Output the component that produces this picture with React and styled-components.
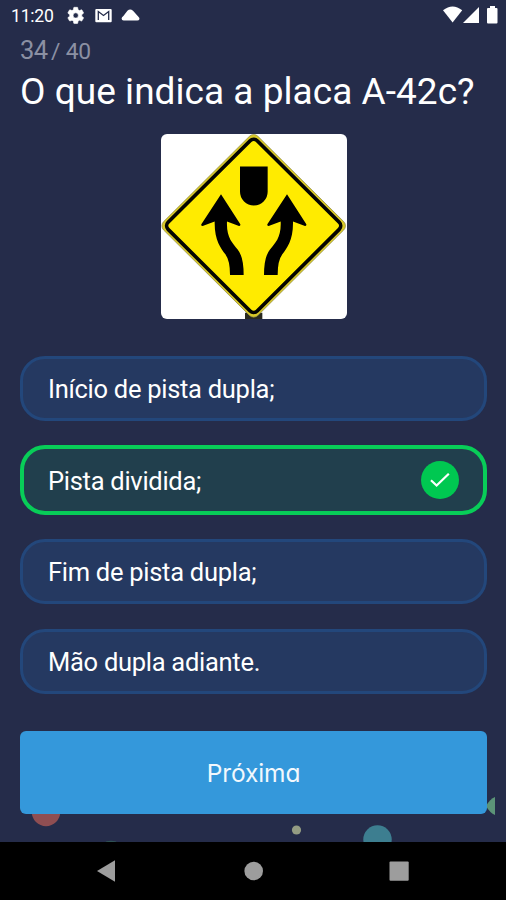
import React from "react";
import styled, { createGlobalStyle } from "styled-components";

const GlobalStyle = createGlobalStyle`
  * { box-sizing: border-box; }
  body { margin: 0; background: #252c4a; }
`;

const Screen = styled.div`
  width: 506px;
  height: 900px;
  display: flex;
  flex-direction: column;
  overflow: hidden;
  position: relative;
  background: #252c4a;
  color: #fff;
  font-family: Roboto, "Liberation Sans", sans-serif;
`;

const StatusBar = styled.header`
  height: 32px;
  flex: none;
  display: flex;
  justify-content: space-between;
  padding: 0 7px 0 11px;
`;

const StatusGroup = styled.div`
  display: flex;
  height: 32px;
`;

const Clock = styled.span`
  width: 56px;
  font-size: 17.6px;
  line-height: 32px;
  letter-spacing: -0.25px;
  white-space: nowrap;
`;

const Quiz = styled.main`
  flex: 1;
  display: flex;
  flex-direction: column;
  padding: 0 19px 28px 20px;
  position: relative;
`;

const Counter = styled.div`
  height: 36px;
  display: flex;
  align-items: baseline;
  color: #8b90a3;
  line-height: 36px;
`;

const Current = styled.span`
  font-size: 25.5px;
  width: 31px;
  letter-spacing: -0.5px;
`;

const Total = styled.span`
  font-size: 22.8px;
  letter-spacing: -0.2px;
`;

const Question = styled.h1`
  margin: 0;
  height: 66px;
  font-size: 37px;
  font-weight: 400;
  line-height: 48px;
  letter-spacing: 0.04px;
  white-space: nowrap;
`;

const SignCard = styled.div`
  width: 186px;
  height: 185px;
  align-self: center;
  border-radius: 6px;
  overflow: hidden;
  background: #fff;
  margin-bottom: 36.5px;

  svg { display: block; }
`;

const Options = styled.div`
  display: flex;
  flex-direction: column;
  gap: 24.4px;
`;

const Option = styled.button`
  width: 467px;
  height: ${(p) => (p.$correct ? 70 : 65)}px;
  display: flex;
  align-items: center;
  justify-content: space-between;
  padding: ${(p) => (p.$correct ? "0 24px" : "1px 25px 0")};
  border: ${(p) => (p.$correct ? "4px solid #08cd58" : "3px solid #23477b")};
  border-radius: 25px;
  background: ${(p) => (p.$correct ? "#213f4d" : "#253961")};
  color: #fff;
  font: 400 25.5px Roboto, "Liberation Sans", sans-serif;
  letter-spacing: -0.28px;
  white-space: nowrap;
`;

const OptionLabel = styled.span`
  padding-top: ${(p) => (p.$correct ? 2 : 0)}px;
`;

const CheckBadge = styled.span`
  width: 38px;
  height: 38px;
  display: grid;
  place-items: center;
  border-radius: 50%;
  background: #00c851;
`;

const NextButton = styled.button`
  height: 83px;
  flex: none;
  margin-top: auto;
  padding: 0;
  border: 0;
  border-radius: 6px;
  background: #3498db;
  color: #f2f8fd;
  font: 400 24.5px Inter, Lato, sans-serif;
  font-feature-settings: "cv11" 1;
  letter-spacing: -0.1px;
  position: relative;
`;

const Confetti = styled.svg`
  position: absolute;
  left: 0;
  bottom: 0;
`;

const NavBar = styled.nav`
  height: 58px;
  flex: none;
  background: #000;

  svg { display: block; }
`;

const OPTIONS = [
  { text: "Início de pista dupla;" },
  { text: "Pista dividida;", correct: true },
  { text: "Fim de pista dupla;" },
  { text: "Mão dupla adiante." },
];

function StatusIcons() {
  return (
    <svg width="76" height="32" viewBox="67 0 76 32" fill="#fff">
      <path
        transform="translate(66 5.7) scale(0.81)"
        stroke="#fff"
        strokeWidth="0.7"
        d="M19.43 12.98c.04-.32.07-.64.07-.98s-.03-.66-.07-.98l2.11-1.65c.19-.15.24-.42.12-.64l-2-3.46c-.12-.22-.39-.3-.61-.22l-2.49 1c-.52-.4-1.08-.73-1.69-.98l-.38-2.65A.49.49 0 0 0 14 2h-4c-.25 0-.46.18-.49.42l-.38 2.65c-.61.25-1.17.59-1.69.98l-2.49-1c-.23-.09-.49 0-.61.22l-2 3.46c-.13.22-.07.49.12.64l2.11 1.65c-.04.32-.07.65-.07.98s.03.66.07.98l-2.11 1.65c-.19.15-.24.42-.12.64l2 3.46c.12.22.39.3.61.22l2.49-1c.52.4 1.08.73 1.69.98l.38 2.65c.03.24.24.42.49.42h4c.25 0 .46-.18.49-.42l.38-2.65c.61-.25 1.17-.59 1.69-.98l2.49 1c.23.09.49 0 .61-.22l2-3.46c.12-.22.07-.49-.12-.64zM12 15.2a3.2 3.2 0 1 1 0-6.4 3.2 3.2 0 0 1 0 6.4z"
      />
      <rect x="95.3" y="9" width="16.4" height="13.2" rx="1" />
      <path d="M98.3 20V11.6L103.5 15.4L108.7 11.6V20" fill="none" stroke="#252c4a" strokeWidth="1.3" />
      <path d="M123.6 20.5Q121.6 20.5 121.6 18.6Q121.6 17 123.4 16L127.4 10.8Q130.2 8.4 133 10.8L138.2 16.6Q140 18 139.4 19.3Q139 20.5 137.2 20.5Z" />
    </svg>
  );
}

function SignalIcons() {
  return (
    <svg width="58" height="32" viewBox="441 0 58 32" fill="#fff">
      <path d="M443 10.2Q452.6 2.6 462.2 10.2L452.6 22.5Z" />
      <path d="M479 7V23H463Z" />
      <path d="M490 6h5v2h1.500q1 0 1 1v13.500q0 1-1 1h-8.500q-1 0-1-1V9q0-1 1-1h2z" />
    </svg>
  );
}

function DividedRoadSign() {
  return (
    <svg width="186" height="185" viewBox="18 16 558 558" preserveAspectRatio="none">
      <path d="M270 555h52v19h-52z" fill="#29291f" />
      <rect x="96" y="93" width="400" height="400" rx="18" fill="#d9c928" stroke="#8c8748" strokeWidth="2" transform="rotate(45 296 293)" />
      <rect x="107" y="104" width="378" height="378" rx="15" fill="#ffeb00" stroke="#050500" strokeWidth="11" transform="rotate(45 296 293)" />
      <path d="M255 114H338V190A41.5 41.5 0 0 1 255 190Z" />
      <path d="M198 198L256 288Q257 294 250 293L216 280C214 328 232 344 248 364Q266 386 266 441H225Q225 398 211 379C197 359 178 336 179 280L145 293Q137 294 139 288Z" />
      <path d="M396 198L454 288Q455 294 448 293L414 280C415 336 396 359 382 379Q368 398 368 441H327Q327 386 345 364C361 344 379 328 377 280L343 293Q336 294 337 288Z" />
    </svg>
  );
}

export default function App() {
  return (
    <>
      <GlobalStyle />
      <Screen>
        <StatusBar>
          <StatusGroup>
            <Clock>11:20</Clock>
            <StatusIcons />
          </StatusGroup>
          <SignalIcons />
        </StatusBar>
        <Quiz>
          <Confetti width="506" height="60" viewBox="0 782 506 60">
            <circle cx="46" cy="812" r="14.2" fill="#8f4e52" />
            <ellipse cx="111" cy="843" rx="6" ry="2.3" fill="#2f5255" />
            <circle cx="296.5" cy="830" r="4.6" fill="#949c83" />
            <circle cx="377.5" cy="839.5" r="14.2" fill="#3d7e90" />
            <path d="M495 797V815Q490 813 486 806Q490 799 495 797Z" fill="#5c9478" />
          </Confetti>
          <Counter>
            <Current>34</Current>
            <Total>/ 40</Total>
          </Counter>
          <Question>O que indica a placa A-42c?</Question>
          <SignCard>
            <DividedRoadSign />
          </SignCard>
          <Options>
            {OPTIONS.map((o) => (
              <Option key={o.text} $correct={o.correct}>
                <OptionLabel $correct={o.correct}>{o.text}</OptionLabel>
                {o.correct && (
                  <CheckBadge>
                    <svg width="20" height="16" viewBox="0 0 20 16" fill="none" stroke="#fff" strokeWidth="2.2">
                      <path d="M1 8.3L6.6 13.5L18.8 1.7" />
                    </svg>
                  </CheckBadge>
                )}
              </Option>
            ))}
          </Options>
          <NextButton>Próxima</NextButton>
        </Quiz>
        <NavBar>
          <svg width="506" height="58" viewBox="0 842 506 58" fill="#9d9d9d">
            <path d="M97 871L115 860.3V881.7Z" />
            <circle cx="253.7" cy="871" r="9.3" />
            <rect x="389.5" y="861.5" width="19.2" height="19.2" rx="1" />
          </svg>
        </NavBar>
      </Screen>
    </>
  );
}
